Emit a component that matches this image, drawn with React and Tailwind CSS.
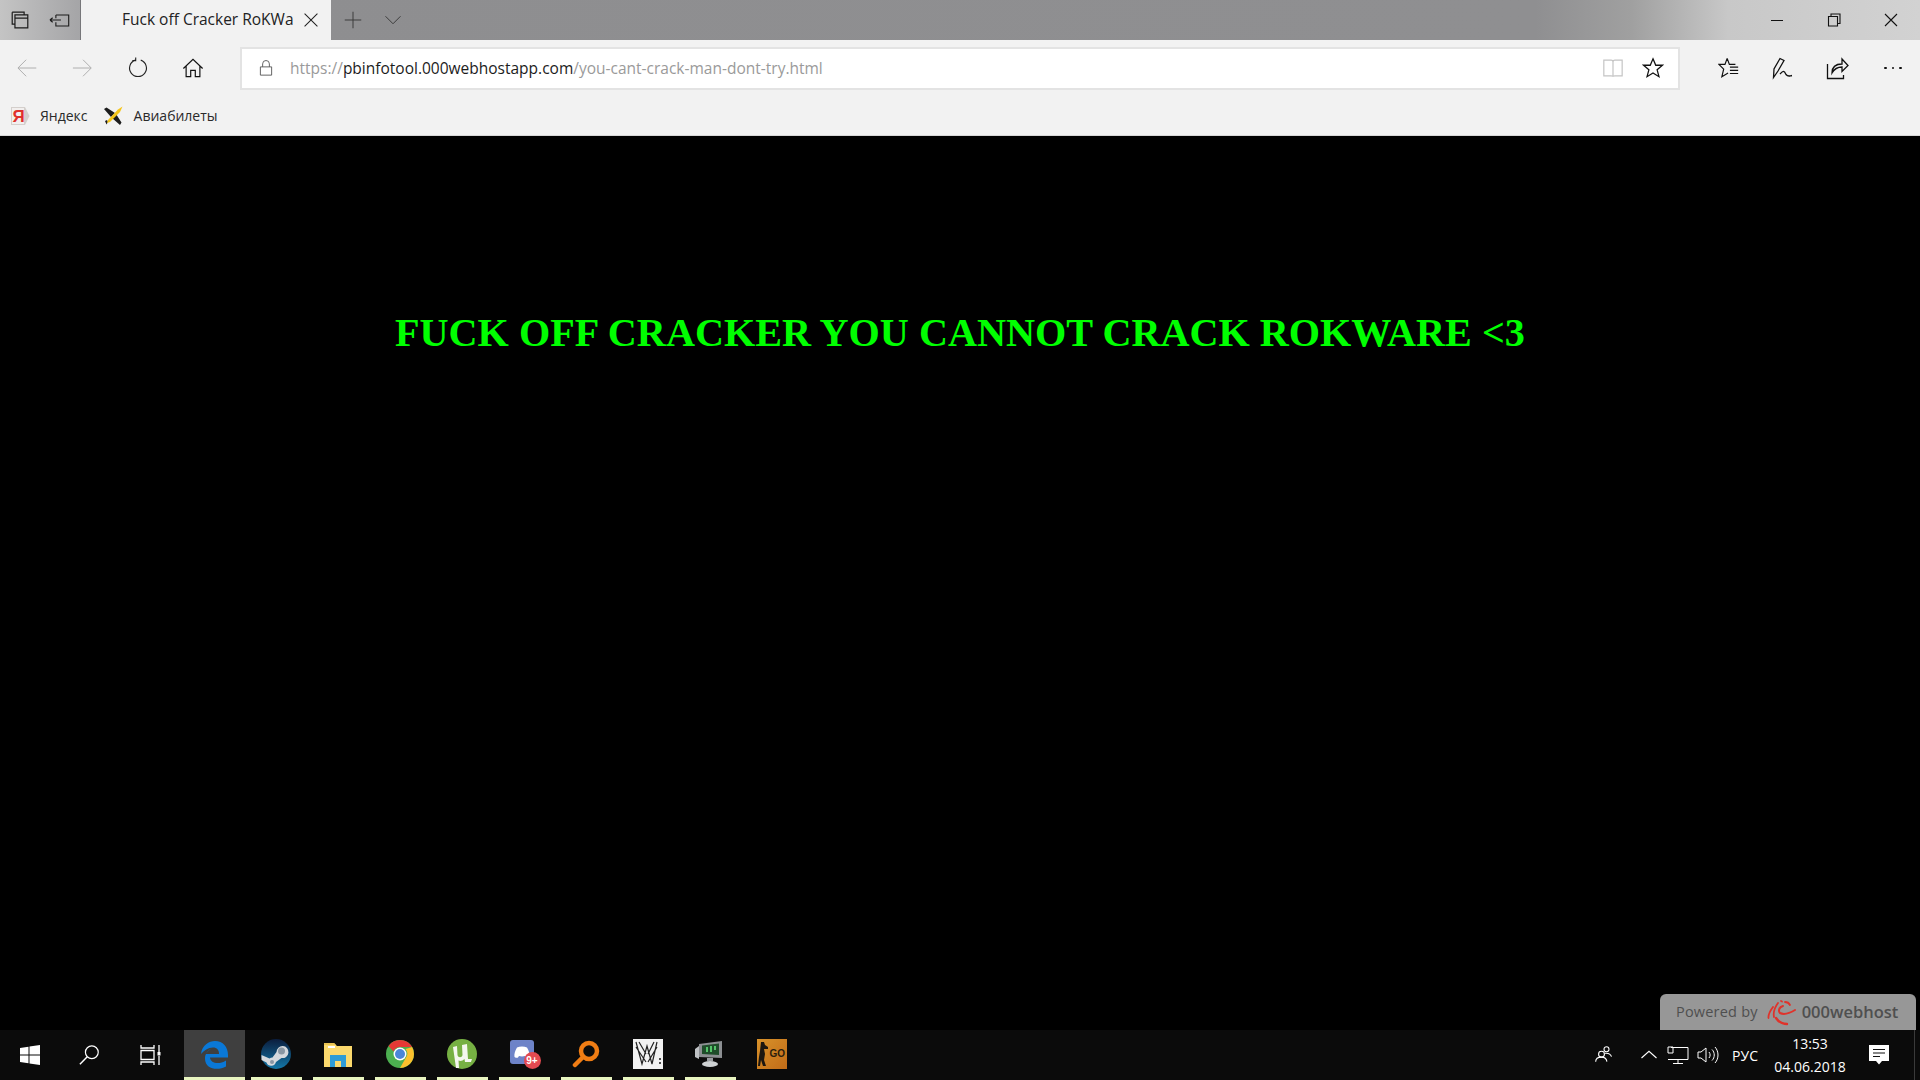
import React from 'react';

const Ico = ({ size = 24, className = '', children, vb = '0 0 24 24' }) => (
  <svg width={size} height={size} viewBox={vb} fill="none" stroke="currentColor" strokeWidth="1" className={className}>
    {children}
  </svg>
);

const TitleBar = () => (
  <div className="flex h-10 bg-[linear-gradient(90deg,#c4c4c4_0%,#a6a6a8_4%,#8e8e90_10%,#8f8f91_80%,#a0a0a0_85%,#c8c8c8_90%,#d2d2d2_100%)]">
    <div className="flex w-[81px] items-center border-r border-[#77777a] text-[#1a1a1a]">
      <Ico size={22} className="ml-[9px]">
        <path d="M3.500 3.500h13v3M3.500 3.500v13h3M6.500 6.500h14v14h-14zM6.500 10h14" strokeWidth="1.300" />
      </Ico>
      <Ico size={22} className="ml-[18px]">
        <path d="M7.500 6.500h14v12h-14v-4M7.500 6.500v3.500M1 12h12M1 12l3-2.500M1 12l3 2.500" strokeWidth="1.200" />
      </Ico>
    </div>
    <div className="flex w-[250px] items-center bg-[#f2f2f2] pl-[41px]">
      <span className="w-[172px] whitespace-nowrap font-['Open_Sans',sans-serif] text-[15.500px] text-[#222]">Fuck off Cracker RoKWa</span>
      <Ico size={14} className="ml-[10px] text-[#222]">
        <path d="M1 1l22 22M23 1L1 23" strokeWidth="1.800" />
      </Ico>
    </div>
    <div className="flex items-center text-[#3a3a3a]">
      <Ico size={18} className="ml-[13px]">
        <path d="M12 1v22M1 12h22" strokeWidth="1.300" />
      </Ico>
      <Ico size={18} className="ml-[22px]">
        <path d="M2 7l10 10 10-10" strokeWidth="1.300" />
      </Ico>
    </div>
    <div className="ml-auto flex items-center text-[#111]">
      <div className="h-px w-3 bg-[#111]" />
      <Ico size={14} vb="0 0 14 14" className="ml-[44px]">
        <path d="M1.500 3.500h9v9.500h-9zM4 3.500V1h9v9.500h-2.500" strokeWidth="1.100" />
      </Ico>
      <Ico size={14} vb="0 0 14 14" className="ml-[43px] mr-[22px]">
        <path d="M1 1l12 12M13 1L1 13" strokeWidth="1.100" />
      </Ico>
    </div>
  </div>
);

const Toolbar = () => (
  <div className="flex h-[56px] items-center bg-[#f2f2f2]">
    <Ico size={22} className="ml-[17px] text-[#a8a8a8]">
      <path d="M21 12H1.500M10 3l-9 9 9 9" />
    </Ico>
    <Ico size={22} className="ml-[33px] text-[#a8a8a8]">
      <path d="M1 12h19.500M12 3l9 9-9 9" />
    </Ico>
    <Ico size={22} className="ml-[33px] text-[#222]">
      <path d="M9 3.400A9.200 9.200 0 1 0 15 3.400M9.500 0.500v3.500H5.800" strokeWidth="1.200" />
    </Ico>
    <Ico size={22} className="ml-[33px] text-[#111]">
      <path d="M1.500 12.500L12 2.500l10.500 10M4.500 10v11.500h5v-7h5v7h5V10" strokeWidth="1.300" />
    </Ico>
    <div className="ml-[36px] flex h-[43px] w-[1440px] items-center border-2 border-[#e3e3e3] bg-white">
      <Ico size={18} className="ml-[15px] text-[#555]">
        <path d="M4.500 10.500h15v11h-15zM7.500 10.500V6.500a4.500 4.500 0 0 1 9 0v4" strokeWidth="1.200" />
      </Ico>
      <div className="ml-[15px] pt-[2px] whitespace-nowrap font-['Open_Sans',sans-serif] text-[15.500px] text-[#9a9a9a]">
        https://<span className="text-[#1c1c1c]">pbinfotool.000webhostapp.com</span>/you-cant-crack-man-dont-try.html
      </div>
      <Ico size={22} className="ml-auto text-[#c4c4c4]">
        <path d="M2 3.500h8q2 0 2 2 0-2 2-2h8v17h-8q-2 0-2 1 0-1-2-1H2zM12 5.500v16" strokeWidth="1.300" />
      </Ico>
      <Ico size={22} className="ml-[18px] mr-[14px] text-[#111]">
        <path d="M12 2l3 7h7.300l-5.800 5 2 7.500-6.500-4-6.500 4 2-7.500L1.700 9H9z" strokeWidth="1.400" />
      </Ico>
    </div>
    <Ico size={22} className="ml-[38px] text-[#111]">
      <path d="M10 1.500l2.400 6.500H19M10 1.500L7.600 8H1l5.200 5.200L4.200 21.500l6.800-4M13 11h9M13 14.500h9M13 18h9" strokeWidth="1.300" />
    </Ico>
    <Ico size={24} className="ml-[31px] text-[#111]">
      <path d="M2.500 21.500L3 13 9 2.500l4 2L7 15l-4.500 6.500zM9 18c3-3 4-4 6 .500 2 2.500 3 1.500 6 1" strokeWidth="1.300" />
    </Ico>
    <Ico size={24} className="ml-[30px] text-[#111]">
      <path d="M2.500 8v14.500h16V19M7 17c0-6 4-9 10-9V3l6 6.500-6 6V11c-4 0-7.500 1.500-10 6z" strokeWidth="1.300" />
    </Ico>
    <div className="ml-[35px] flex gap-[5px]">
      <div className="size-[2.500px] rounded-full bg-[#111]" />
      <div className="size-[2.500px] rounded-full bg-[#111]" />
      <div className="size-[2.500px] rounded-full bg-[#111]" />
    </div>
  </div>
);

const FavBar = () => (
  <div className="flex h-10 items-center border-b border-[#d8d8d8] bg-[#f2f2f2] font-['Open_Sans',sans-serif] text-[14px] text-[#2a2a2a]">
    <svg width="20" height="20" viewBox="0 0 20 20" className="ml-[10px]">
      <path d="M1 1h14l4.500 9-4.500 9H1z" fill="#d4cfcc" />
      <path d="M2 2h12v16H2z" fill="#f2efee" />
      <text x="8.500" y="16" textAnchor="middle" fontFamily="Liberation Sans" fontSize="17" fontWeight="bold" fill="#e0302b">Я</text>
    </svg>
    <span className="ml-[10px]">Яндекс</span>
    <svg width="20" height="20" viewBox="0 0 20 20" className="ml-[15px]">
      <path d="M1 3l2.500-1.500L12 7l-4 4zM17 19l1.500-2.500L13 8l-4 4z" fill="#1c1c1c" />
      <path d="M2 15l2-1 1 2-1.500 2.500z" fill="#1c1c1c" />
      <path d="M19.500 .500L17 6 7 16l-3 1 1-3L15 3.500z" fill="#f5c518" />
    </svg>
    <span className="ml-[11px]">Авиабилеты</span>
  </div>
);

const EdgeIcon = () => (
  <svg width="30" height="30" viewBox="0 0 30 30">
    <path d="M2 15C3 6 10 2 16 2c8 0 13 6 13 14v2.500H11c.500 6 9 7.500 16 3v6c-8 4.500-21 3-21-8 0-5 3-8 7-10-3 1-5 3-6 5.500h13c0-4-2-6.500-6-6.500-5 0-9 3-12 6.500z" fill="#0a78d7" />
  </svg>
);

const SteamIcon = () => (
  <svg width="30" height="30" viewBox="0 0 30 30">
    <defs>
      <linearGradient id="steam" x1="0" y1="0" x2="0" y2="1">
        <stop offset="0" stopColor="#0b1d3d" />
        <stop offset="1" stopColor="#1478a8" />
      </linearGradient>
    </defs>
    <circle cx="15" cy="15" r="15" fill="url(#steam)" />
    <path d="M0.500 16l8 3.500a5 5 0 0 1 3-1l4-5.500a6 6 0 1 1 5 6l-5.500 4a5 5 0 0 1-9.500 .500l-5-2.500z" fill="#d5d9dd" />
    <circle cx="20.500" cy="12" r="3.500" fill="#8a97a3" />
    <circle cx="11" cy="23" r="2" fill="#8a97a3" />
  </svg>
);

const FilesIcon = () => (
  <svg width="28" height="26" viewBox="0 0 28 26">
    <path d="M0 2h10l3 3h15v21H0z" fill="#fbd96d" />
    <path d="M0 2h10l2 2H0z" fill="#e9c353" />
    <path d="M4 5h7v2H4z" fill="#fff" />
    <path d="M6 14h16v12h-5v-6h-6v6H6z" fill="#2e9cd6" />
  </svg>
);

const ChromeIcon = () => (
  <svg width="28" height="28" viewBox="0 0 28 28">
    <circle cx="14" cy="14" r="14" fill="#4caf50" />
    <path d="M14 0a14 14 0 0 1 12.100 7H14a7 7 0 0 0-6.500 4.500L2.500 6A14 14 0 0 1 14 0z" fill="#e53935" />
    <path d="M26.100 7A14 14 0 0 1 14 28l6-10.500A7 7 0 0 0 19.500 9z" fill="#fbc02d" />
    <circle cx="14" cy="14" r="6.500" fill="#fff" />
    <circle cx="14" cy="14" r="5" fill="#4a86d8" />
  </svg>
);

const TorrentIcon = () => (
  <svg width="30" height="30" viewBox="0 0 30 30">
    <circle cx="15" cy="15" r="15" fill="#76b043" />
    <path d="M6 8l4-1 .500 9c.500 3 4.500 3 5 0L15 6l5-1 1 15 4 0-1 3-6 0-.500-3c-2 2-4 2.500-6 1.500L12 29H9z" fill="#f4f7ef" />
  </svg>
);

const DiscordIcon = () => (
  <div className="relative h-[28px] w-[28px]">
    <div className="flex h-[24px] w-[24px] items-center justify-center rounded-[3px] bg-[#6d83c8]">
      <svg width="16" height="12" viewBox="0 0 16 12">
        <path d="M3 1.500C6 0 10 0 13 1.500 15 5 16 8 15.500 11c-1.500 1-3 1-3.500 .500L11 10c-2 .500-4 .500-6 0l-1 1.500C3.500 12 2 12 .500 11 0 8 1 5 3 1.500z" fill="#fff" />
      </svg>
    </div>
    <div className="absolute -bottom-[1px] -right-[3px] flex h-[17px] w-[17px] items-center justify-center rounded-full bg-[#e34a50] font-['Liberation_Sans',sans-serif] text-[10px] font-bold text-white">9+</div>
  </div>
);

const LoupeIcon = () => (
  <svg width="28" height="28" viewBox="0 0 28 28" fill="none" stroke="#f07d14">
    <circle cx="17" cy="11" r="8" strokeWidth="4.500" />
    <path d="M11 17L3 25" strokeWidth="4.500" strokeLinecap="round" />
  </svg>
);

const WatchDogsIcon = () => (
  <div className="flex h-[30px] w-[30px] items-center justify-center bg-[#f2f2f2]">
    <svg width="30" height="30" viewBox="0 0 30 30" fill="none" stroke="#222" strokeWidth="1.200">
      <path d="M3 3l6 22 5-18 5 18 5-22M3 8l10 15M24 8L15 23M6 3l7 12M21 3l-6 12" />
      <path d="M27 19v2M27 23v2" strokeWidth="1.600" />
    </svg>
  </div>
);

const MonitorIcon = () => (
  <svg width="30" height="30" viewBox="0 0 30 30">
    <path d="M4 5l23-3v17L4 18z" fill="#8c8f92" />
    <path d="M7 6.500l17-2V16L7 15z" fill="#1f4d2a" />
    <path d="M11 8h2v5h-2zM15 7h2v6h-2zM19 7h2v4h-2z" fill="#55c56a" />
    <path d="M0 10l4-3v13l-4-2z" fill="#bfc2c4" />
    <path d="M12 19h6v3h-6z" fill="#9a9da0" />
    <ellipse cx="15" cy="25" rx="8" ry="3" fill="#cfd2d4" />
  </svg>
);

const CsIcon = () => (
  <div className="flex h-[30px] w-[30px] items-center gap-px bg-[linear-gradient(135deg,#d8922a,#c26c18)] pl-[1px]">
    <svg width="11" height="26" viewBox="0 0 11 26">
      <path d="M3 1h3l1 3 3 2v2H6l1 5-1 6 2 6H5l-2-6-1 6H0l1-9 1-6z" fill="#1d1710" />
    </svg>
    <span className="font-['Liberation_Sans',sans-serif] text-[10px] font-bold leading-none text-[#2a1d0d]">GO</span>
  </div>
);

const apps = [
  { id: 'steam', el: <SteamIcon />, open: true, ml: 'ml-[6px]' },
  { id: 'files', el: <FilesIcon />, open: true, ml: 'ml-[11px]' },
  { id: 'chrome', el: <ChromeIcon />, open: true, ml: 'ml-[11px]' },
  { id: 'torrent', el: <TorrentIcon />, open: true, ml: 'ml-[11px]' },
  { id: 'discord', el: <DiscordIcon />, open: true, ml: 'ml-[11px]' },
  { id: 'loupe', el: <LoupeIcon />, open: true, ml: 'ml-[11px]' },
  { id: 'wd', el: <WatchDogsIcon />, open: true, ml: 'ml-[11px]' },
  { id: 'monitor', el: <MonitorIcon />, open: true, ml: 'ml-[11px]' },
  { id: 'cs', el: <CsIcon />, open: false, ml: 'ml-[11px]' },
];

const Taskbar = () => (
  <div className="relative flex h-[50px] items-stretch bg-[#0b0b0b] text-white">
    <div className="flex w-[60px] items-center justify-center">
      <svg width="20" height="20" viewBox="0 0 20 20" fill="#fff">
        <path d="M0 3l8.500-1.200v7.700H0zM9.500 1.600L20 0v9.500H9.500zM0 10.500h8.500v7.700L0 17zM9.500 10.500H20V20L9.500 18.400z" />
      </svg>
    </div>
    <div className="flex w-[60px] items-center justify-center">
      <Ico size={22}>
        <circle cx="14" cy="9" r="7" strokeWidth="1.300" />
        <path d="M9 14l-8 8" strokeWidth="1.600" />
      </Ico>
    </div>
    <div className="flex w-[64px] items-center justify-center pr-[2px]">
      <svg width="22" height="20" viewBox="0 0 22 20" fill="none" stroke="#fff" strokeWidth="1.300">
        <path d="M1 0v3h13V0M1 5.500h13v9H1zM1 20v-3h13v3M19 0v7M19 11v9" />
        <rect x="17.500" y="7" width="3" height="3.500" fill="#fff" stroke="none" />
      </svg>
    </div>
    <div className="flex w-[61px] flex-col bg-[#3f3f3f]">
      <div className="flex flex-1 items-center justify-center pr-[2px]"><EdgeIcon /></div>
      <div className="h-[3px] bg-[#e8f5c0]" />
    </div>
    {apps.map((a) => (
      <div key={a.id} className={`flex w-[51px] flex-col ${a.ml}`}>
        <div className="flex flex-1 items-center justify-center pr-[2px]">{a.el}</div>
        <div className={a.open ? 'h-[3px] bg-[#e8f5c0]' : 'h-[3px]'} />
      </div>
    ))}
    <div className="ml-auto flex items-center">
      <Ico size={20} className="mr-[26px]">
        <circle cx="9" cy="11" r="3.500" strokeWidth="1.300" />
        <circle cx="15" cy="5" r="3" strokeWidth="1.300" />
        <path d="M2 20c0-4 3-5.500 7-5.500s6 2 6.500 5.500M13 10c4-.500 7 1 8 4" strokeWidth="1.300" />
      </Ico>
      <Ico size={18} className="mr-[9px]">
        <path d="M2 16L12 7l10 9" strokeWidth="1.500" />
      </Ico>
      <svg width="22" height="20" viewBox="0 0 22 20" fill="none" stroke="#fff" className="mr-[8px]">
        <path d="M4 2.500h17v12H1M11 14.500v3.500M6 18.500h10M1 2h5v6H1z" />
      </svg>
      <svg width="22" height="20" viewBox="0 0 22 20" fill="none" stroke="#fff" className="mr-[13px]">
        <path d="M1 7h3l5-4v14l-5-4H1zM12 7c1.500 2 1.500 4 0 6M15 4.500c3 3 3 8 0 11M18 2c4 4.500 4 11.500 0 16" />
      </svg>
      <span className="mr-[16px] font-['Open_Sans',sans-serif] text-[14px]">РУС</span>
      <div className="mr-[23px] flex w-[72px] flex-col items-center font-['Open_Sans',sans-serif] text-[14px] leading-[23px]">
        <span>13:53</span>
        <span>04.06.2018</span>
      </div>
      <svg width="20" height="20" viewBox="0 0 20 20" className="mr-[25px]">
        <path d="M0 0h20v16h-7l-3 3.500L7 16H0z" fill="#fff" />
        <path d="M4 4.500h12M4 8h12M4 11.500h7" stroke="#111" />
      </svg>
      <div className="h-full w-px bg-[#3a3a3a]" />
      <div className="w-[5px]" />
    </div>
  </div>
);

const WebhostBadge = () => (
  <div className="absolute bottom-0 right-[4px] flex h-[36px] w-[256px] items-center rounded-t-[6px] bg-[#979797] pl-[16px] font-['Open_Sans',sans-serif] text-[#4f4f4f]">
    <span className="text-[14.500px] tracking-[0.2px]">Powered by</span>
    <svg width="30" height="28" viewBox="0 0 30 28" fill="none" stroke="#e0322a" strokeLinecap="round" className="ml-[9px]">
      <path d="M6 9C3 13 1 16 1.500 20" strokeWidth="1.800" />
      <path d="M11 5C8 9 6 14 7 19" strokeWidth="1.800" />
      <path d="M16 8c-4 1-5 5-3 7 4 2 10 0 15-3" strokeWidth="2" />
      <path d="M9 20c2 3 6 6 11 6" strokeWidth="2.400" />
      <path d="M14 3l1 .500M18 4c2 0 4 1 5 3" strokeWidth="1.800" />
    </svg>
    <span className="ml-[5px] text-[16.500px] font-semibold">000webhost</span>
  </div>
);

export default function App() {
  return (
    <div className="flex h-screen w-full flex-col overflow-hidden bg-black">
      <TitleBar />
      <Toolbar />
      <FavBar />
      <div className="relative flex-1 bg-black">
        <h1 className="pt-[174px] text-center font-['Liberation_Serif',serif] text-[40.200px] font-bold leading-[46px] text-[#00ff00]">
          FUCK OFF CRACKER YOU CANNOT CRACK ROKWARE &lt;3
        </h1>
        <WebhostBadge />
      </div>
      <Taskbar />
    </div>
  );
}
